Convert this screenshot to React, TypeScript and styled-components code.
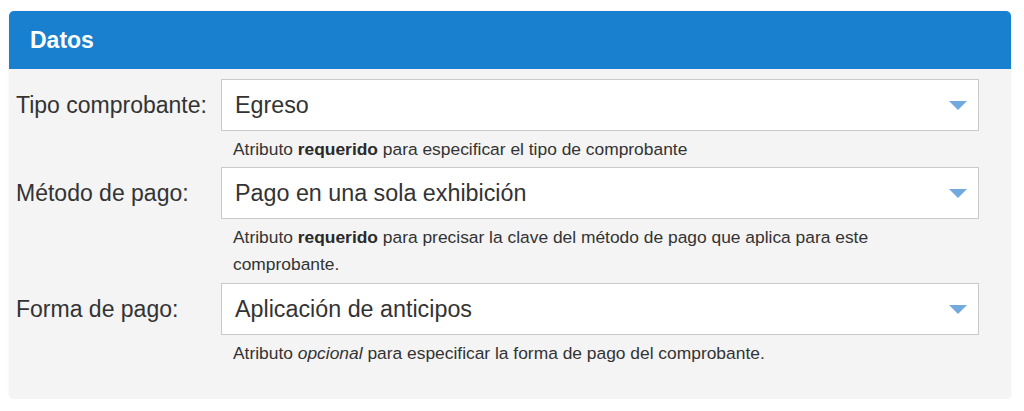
import styled, { createGlobalStyle } from "styled-components";

const GlobalStyle = createGlobalStyle`
  body {
    margin: 0;
    background: #ffffff;
    font-family: "Liberation Sans", Arial, sans-serif;
  }
`;

const Panel = styled.section`
  width: 1002px;
  margin: 11px 0 0 9px;
  background: #f4f4f4;
  border-radius: 5px;
  box-shadow: 0 0 2px rgba(0, 0, 0, 0.08);
  overflow: hidden;
`;

const Header = styled.header`
  height: 58px;
  display: flex;
  align-items: center;
  padding-left: 21px;
  background: #1880cf;
  color: #ffffff;
  font-size: 23px;
  font-weight: 700;
`;

const Body = styled.div`
  display: flex;
  flex-direction: column;
  gap: 4px;
  padding: 10px 32px 32px 7px;
`;

const Row = styled.div`
  display: grid;
  grid-template-columns: 205px 1fr;
  align-items: start;
`;

const Label = styled.label`
  height: 52px;
  line-height: 53px;
  font-size: 23px;
  color: #333333;
  white-space: nowrap;
`;

const Field = styled.div`
  display: flex;
  flex-direction: column;
`;

const SelectBox = styled.div`
  height: 52px;
  box-sizing: border-box;
  display: flex;
  align-items: center;
  justify-content: space-between;
  padding: 0 11px 0 13px;
  background: #ffffff;
  border: 1px solid #c9c9c9;
  font-size: 23.3px;
  color: #333333;
`;

const Help = styled.p<{ $lines?: number }>`
  margin: 5px 0 ${(p) => ((p.$lines ?? 1) > 1 ? 1 : 0)}px;
  padding-left: 12px;
  max-width: 690px;
  font-size: 17.4px;
  line-height: 27px;
  color: #333333;

  strong {
    font-weight: 700;
    color: #2a2a2a;
  }
  em {
    font-style: italic;
  }
`;

const Arrow = () => (
  <svg width="18" height="9" viewBox="0 0 18 9">
    <path d="M0 0 H18 L9 9 Z" fill="#72aadd" />
  </svg>
);

type FieldRow = {
  label: string;
  value: string;
  lines: number;
  help: React.ReactNode;
};

const rows: FieldRow[] = [
  {
    label: "Tipo comprobante:",
    value: "Egreso",
    lines: 1,
    help: (
      <>
        Atributo <strong>requerido</strong> para especificar el tipo de
        comprobante
      </>
    ),
  },
  {
    label: "Método de pago:",
    value: "Pago en una sola exhibición",
    lines: 2,
    help: (
      <>
        Atributo <strong>requerido</strong> para precisar la clave del método
        de pago que aplica para este comprobante.
      </>
    ),
  },
  {
    label: "Forma de pago:",
    value: "Aplicación de anticipos",
    lines: 1,
    help: (
      <>
        Atributo <em>opcional</em> para especificar la forma de pago del
        comprobante.
      </>
    ),
  },
];

export default function App() {
  return (
    <>
      <GlobalStyle />
      <Panel>
        <Header>Datos</Header>
        <Body>
          {rows.map((row) => (
            <Row key={row.label}>
              <Label>{row.label}</Label>
              <Field>
                <SelectBox>
                  <span>{row.value}</span>
                  <Arrow />
                </SelectBox>
                <Help $lines={row.lines}>{row.help}</Help>
              </Field>
            </Row>
          ))}
        </Body>
      </Panel>
    </>
  );
}
